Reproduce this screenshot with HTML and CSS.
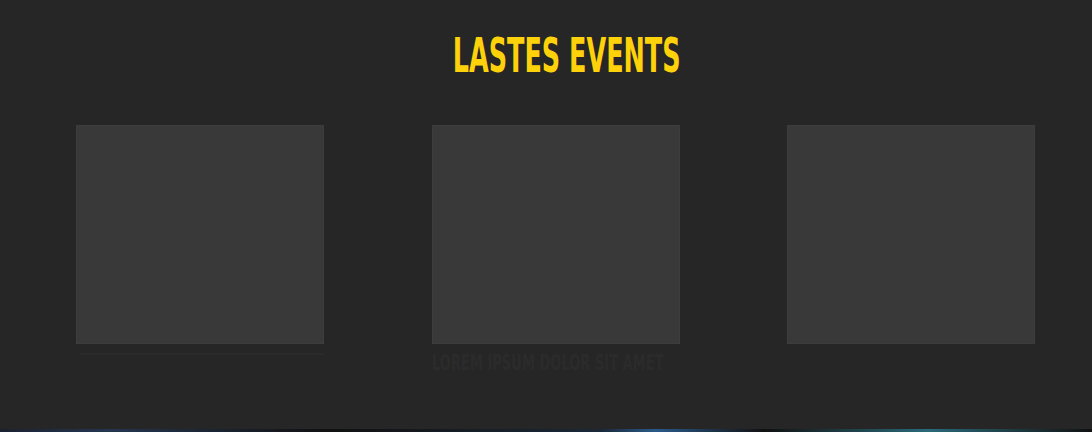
FILE: index.html
```html
<!DOCTYPE html>
<html lang="en">
<head>
  <meta charset="UTF-8">
  <meta name="viewport" content="width=device-width, initial-scale=1.0">
  <title>Lastes Events</title>
  <link rel="stylesheet" href="styles.css">
</head>
<body>
  <section class="events">
    <h2 class="section-title">Lastes Events</h2>
    <div class="event-list">
      <div class="event-card">
        <div class="thumb"></div>
        <div class="caption-line"></div>
      </div>
      <div class="event-card">
        <div class="thumb"></div>
        <div class="caption"><span>Lorem ipsum dolor sit amet</span></div>
      </div>
      <div class="event-card">
        <div class="thumb"></div>
      </div>
    </div>
  </section>
  <div class="taskbar"></div>
</body>
</html>
```

FILE: styles.css
```css
:root {
  --bg: #262626;
  --card: #393939;
  --yellow: #fdd20b;
}

* {
  margin: 0;
  padding: 0;
  box-sizing: border-box;
}

body {
  background: var(--bg);
  font-family: 'DejaVu Sans', sans-serif;
  height: 432px;
  overflow: hidden;
  display: flex;
  flex-direction: column;
}

.events {
  flex: 1;
  padding-top: 30px;
}

.section-title {
  color: var(--yellow);
  font-family: 'DejaVu Sans Condensed', 'DejaVu Sans', sans-serif;
  font-weight: 700;
  font-size: 48px;
  line-height: 50px;
  text-transform: uppercase;
  text-align: center;
  padding-left: 70px;
  transform: scaleX(0.59);
}

.event-list {
  display: flex;
  justify-content: space-between;
  padding: 0 57px 0 76px;
  margin-top: 45px;
}

.event-card {
  width: 248px;
}

.thumb {
  height: 219px;
  background: var(--card);
  border: 1px solid #3d3d3d;
}

.caption {
  margin-top: 8px;
  color: #2b2b2b;
  font-family: 'DejaVu Sans Condensed', sans-serif;
  font-weight: 700;
  font-size: 22px;
  line-height: 22px;
  text-transform: uppercase;
}

.caption span {
  display: inline-block;
  white-space: nowrap;
  transform: scaleX(0.66);
  transform-origin: left center;
}

.caption-line {
  height: 2px;
  margin-top: 9px;
  margin-left: 4px;
  background: #2a2a2a;
}

.taskbar {
  height: 3px;
  background: linear-gradient(90deg, #1b2130 0%, #243650 10%, #111 30%, #1a2838 55%, #2a5a8a 60%, #111 70%, #2a6a7a 85%, #111 100%);
}
```
